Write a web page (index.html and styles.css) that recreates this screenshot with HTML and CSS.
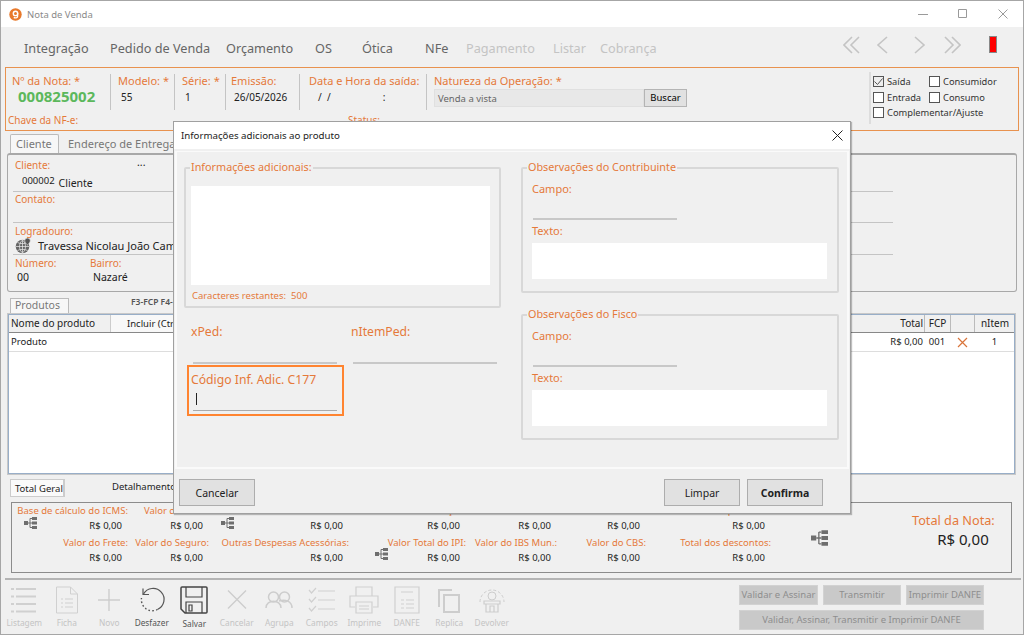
FILE: index.html
```html
<!DOCTYPE html>
<html lang="pt-BR">
<head>
    <meta charset="UTF-8">
    <meta name="viewport" content="width=device-width, initial-scale=1.0">
    <title>Nota de Venda</title>
    <link rel="stylesheet" href="styles.css">
</head>
<body>
    <svg class="defs" width="0" height="0">
        <symbol id="tree" viewBox="0 0 13 12">
            <path d="M0 4h4v4H0zM8 0h5v3H8zM8 4.5h5v3H8zM8 9h5v3H8z" fill="#6e6e6e"/>
            <path d="M4 6h4M6 1.5V10.5M6 1.5h2M6 10.5h2" stroke="#6e6e6e" fill="none"/>
        </symbol>
    </svg>

    <div class="window">
        <div class="titlebar">
            <svg class="app-icon" width="13" height="13" viewBox="0 0 13 13"><circle cx="6.5" cy="6.5" r="6.2" fill="#e8792b"/><circle cx="6.5" cy="5.4" r="2.2" fill="none" stroke="#fff" stroke-width="1.4"/><path d="M8.6 5v3.4c0 1.5-2.6 1.8-3.8 1" fill="none" stroke="#fff" stroke-width="1.3"/></svg>
            <span class="title-text">Nota de Venda</span>
            <div class="win-controls">
                <svg width="10" height="10" viewBox="0 0 10 10"><path d="M0 5.5h10" stroke="#9a9a9a"/></svg>
                <svg width="10" height="10" viewBox="0 0 10 10"><path d="M.5.5h8v8h-8z" fill="none" stroke="#9a9a9a"/></svg>
                <svg width="10" height="10" viewBox="0 0 10 10"><path d="M.5.5l9 9M9.5.5l-9 9" stroke="#9a9a9a"/></svg>
            </div>
        </div>

        <div class="menubar">
            <div class="menu-items">
                <span>Integração</span>
                <span>Pedido de Venda</span>
                <span>Orçamento</span>
                <span>OS</span>
                <span>Ótica</span>
                <span>NFe</span>
                <span class="off">Pagamento</span>
                <span class="off">Listar</span>
                <span class="off">Cobrança</span>
            </div>
            <div class="nav-arrows">
                <svg width="17" height="18" viewBox="0 0 17 18"><path d="M9 1L1 9l8 8M16 1L8 9l8 8" fill="none" stroke="#c4c4c4" stroke-width="1.6"/></svg>
                <svg class="nav-prev" width="12" height="18" viewBox="0 0 12 18"><path d="M11 1L2 9l9 8" fill="none" stroke="#c4c4c4" stroke-width="1.6"/></svg>
                <svg class="nav-next" width="12" height="18" viewBox="0 0 12 18"><path d="M1 1l9 8-9 8" fill="none" stroke="#c4c4c4" stroke-width="1.6"/></svg>
                <svg class="nav-last" width="17" height="18" viewBox="0 0 17 18"><path d="M1 1l8 8-8 8M8 1l8 8-8 8" fill="none" stroke="#c4c4c4" stroke-width="1.6"/></svg>
                <span class="red-flag"></span>
            </div>
        </div>

        <div class="note-head">
            <div class="note-main">
                <div class="note-fields">
                    <div class="nf nf-num"><label>Nº da Nota: *</label><b class="num">000825002</b></div>
                    <div class="nf nf-mod"><label>Modelo: *</label><span>55</span></div>
                    <div class="nf nf-ser"><label>Série: *</label><span>1</span></div>
                    <div class="nf nf-emi"><label>Emissão:</label><span>26/05/2026</span></div>
                    <div class="nf nf-sai"><label>Data e Hora da saída:</label><span class="dt"><i>/ &nbsp;/</i><i>:</i></span></div>
                    <div class="nf nf-nat">
                        <label>Natureza da Operação: *</label>
                        <div class="nat-row"><div class="nat-input">Venda a vista</div><button class="btn-small">Buscar</button></div>
                    </div>
                </div>
                <div class="note-keys"><label>Chave da NF-e:</label><label>Status:</label></div>
            </div>
            <div class="note-checks">
                <div class="check"><span class="box on"><svg width="13" height="13" viewBox="0 0 13 13"><path d="M2.5 6.5l3 3 5-6" fill="none" stroke="#555"/></svg></span>Saída</div>
                <div class="check"><span class="box"></span>Consumidor</div>
                <div class="check"><span class="box"></span>Entrada</div>
                <div class="check"><span class="box"></span>Consumo</div>
                <div class="check wide"><span class="box"></span>Complementar/Ajuste</div>
            </div>
        </div>

        <div class="tabs">
            <span class="tab active">Cliente</span>
            <span class="tab">Endereço de Entrega</span>
        </div>
        <div class="client-panel">
            <div class="c-row c-row1">
                <div class="c-top"><label>Cliente:</label><span class="dots">...</span></div>
                <div class="c-val"><span class="code">000002</span><span class="c-name">Cliente</span></div>
            </div>
            <div class="c-row c-row2"><label>Contato:</label></div>
            <div class="c-row c-row3">
                <label>Logradouro:</label>
                <div class="c-addr">
                    <svg width="16" height="16" viewBox="0 0 16 16"><circle cx="7.5" cy="8.5" r="6.8" fill="#666"/><path d="M1 8.5h13M7.5 2v13M2.5 4.5c3 1.500 7 1.500 10 0M2.500 12.500c3-1.500 7-1.500 10 0M7.500 2c-4 3-4 10 0 13M7.500 2c4 3 4 10 0 13" fill="none" stroke="#eee" stroke-width=".7"/><path d="M12.500 0a2.800 2.800 0 0 1 2.800 2.800c0 1.800-2.800 4.200-2.800 4.200S9.700 4.600 9.700 2.800A2.800 2.800 0 0 1 12.500 0z" fill="#555" stroke="#f0f0f0" stroke-width=".6"/></svg>
                    <span>Travessa Nicolau João Camargo</span>
                </div>
            </div>
            <div class="c-row4">
                <div class="c-num"><label>Número:</label><span>00</span></div>
                <div class="c-bai"><label>Bairro:</label><span>Nazaré</span></div>
            </div>
        </div>

        <div class="prod-tabs">
            <span class="tab-prod">Produtos</span>
            <span class="prod-hint">F3-FCP F4-Lote</span>
        </div>
        <div class="prod-table">
            <div class="p-row p-head">
                <span class="p-name">Nome do produto</span>
                <span class="p-add">Incluir (Ctrl+I)</span>
                <span class="p-total">Total</span>
                <span class="p-fcp">FCP</span>
                <span class="p-del"></span>
                <span class="p-item">nItem</span>
            </div>
            <div class="p-row p-line">
                <span class="p-name">Produto</span>
                <span class="p-add-empty"></span>
                <span class="p-total">R$ 0,00</span>
                <span class="p-fcp">001</span>
                <span class="p-del"><svg width="11" height="11" viewBox="0 0 11 11"><path d="M1 1l9 9M10 1l-9 9" stroke="#d9743a" stroke-width="1.2"/></svg></span>
                <span class="p-item">1</span>
            </div>
        </div>

        <div class="total-tabs">
            <span class="tab-total">Total Geral</span>
            <span class="tab-detail">Detalhamento</span>
        </div>
        <div class="totals">
            <div class="totals-grid">
                <label>Base de cálculo do ICMS:</label>
                <label>Valor do ICMS:</label>
                <label>Base de cálculo do ICMS ST:</label>
                <label>Valor ICMS Substituição:</label>
                <label>Valor do IPI:</label>
                <label>Valor do IBS Est.:</label>
                <label>Valor Total dos produtos:</label>

                <div class="tv"><svg class="tree"><use href="#tree"/></svg><span>R$ 0,00</span></div>
                <div class="tv"><span>R$ 0,00</span></div>
                <div class="tv tv-st"><svg class="tree"><use href="#tree"/></svg><span>R$ 0,00</span></div>
                <div class="tv"><span>R$ 0,00</span></div>
                <div class="tv"><span>R$ 0,00</span></div>
                <div class="tv"><span>R$ 0,00</span></div>
                <div class="tv"><span>R$ 0,00</span></div>

                <label>Valor do Frete:</label>
                <label>Valor do Seguro:</label>
                <label>Outras Despesas Acessórias:</label>
                <label>Valor Total do IPI:</label>
                <label>Valor do IBS Mun.:</label>
                <label>Valor do CBS:</label>
                <label>Total dos descontos:</label>

                <div class="tv"><span>R$ 0,00</span></div>
                <div class="tv"><span>R$ 0,00</span></div>
                <div class="tv"><span>R$ 0,00</span></div>
                <div class="tv tv-ipi"><svg class="tree"><use href="#tree"/></svg><span>R$ 0,00</span></div>
                <div class="tv"><span>R$ 0,00</span></div>
                <div class="tv"><span>R$ 0,00</span></div>
                <div class="tv"><span>R$ 0,00</span></div>
            </div>
            <svg class="tree-big"><use href="#tree"/></svg>
            <div class="grand">
                <label>Total da Nota:</label>
                <span>R$ 0,00</span>
            </div>
        </div>

        <div class="footer">
            <div class="tools">
                <div class="tool"><svg width="28" height="28" viewBox="0 0 28 28"><path d="M6 3h20M6 10.500h20M6 18h20M6 25.500h20M1 3h3M1 10.500h3M1 18h3M1 25.500h3" stroke="#d0d0d0" stroke-width="1.800" fill="none"/></svg><span>Listagem</span></div>
                <div class="tool"><svg width="28" height="28" viewBox="0 0 28 28"><path d="M3.500 1h14l7 7v19h-21zM17.500 1v7h7M8 13h2M12 13h8M8 17h2M12 17h8M8 21h2M12 21h8" fill="none" stroke="#d0d0d0"/></svg><span>Ficha</span></div>
                <div class="tool"><svg width="28" height="28" viewBox="0 0 28 28"><path d="M14 3v22M3 14h22" stroke="#cdcdcd" stroke-width="1.400"/></svg><span>Novo</span></div>
                <div class="tool dark"><svg width="28" height="28" viewBox="0 0 28 28"><path d="M5 2.500V8.500h6" fill="none" stroke="#555" stroke-width="1.200"/><path d="M5.500 8A11 11 0 1 1 19.500 23.500" fill="none" stroke="#555" stroke-width="1.200"/><path d="M19.500 23.500A11 11 0 0 1 3.500 12" fill="none" stroke="#555" stroke-width="1.400" stroke-dasharray="1.600 2.200"/></svg><span>Desfazer</span></div>
                <div class="tool dark"><svg width="28" height="28" viewBox="0 0 28 28"><path d="M1 2a1 1 0 0 1 1-1h24a1 1 0 0 1 1 1v24a1 1 0 0 1-1 1H5l-4-4z" fill="none" stroke="#444" stroke-width="1.500"/><path d="M6 1v10h16V1M6 27V16h16v11M9 19h3v6H9z" fill="none" stroke="#444" stroke-width="1.200"/></svg><span class="save-label">Salvar</span></div>
                <div class="tool"><svg width="28" height="28" viewBox="0 0 28 28"><path d="M5 4.500l18 18M23 4.500l-18 18" stroke="#cdcdcd" stroke-width="1.400"/></svg><span>Cancelar</span></div>
                <div class="tool"><svg width="28" height="28" viewBox="0 0 28 28"><circle cx="8.500" cy="11" r="5" fill="none" stroke="#cdcdcd" stroke-width="1.500"/><circle cx="19.500" cy="11" r="5" fill="none" stroke="#cdcdcd" stroke-width="1.500"/><path d="M1 22c0-9 15-9 15 0M14 15c6-2 13 0 13 7" fill="none" stroke="#cdcdcd" stroke-width="1.500"/></svg><span>Agrupa</span></div>
                <div class="tool"><svg width="28" height="28" viewBox="0 0 28 28"><path d="M10 5h17M10 14h17M10 23h17M1 4l2.500 3L8 2M1 13l2.500 3L8 11M1 22l2.500 3L8 20" fill="none" stroke="#d0d0d0" stroke-width="1.200"/></svg><span>Campos</span></div>
                <div class="tool"><svg width="30" height="28" viewBox="0 0 30 28"><path d="M7 10V1h16v9M6 21H1V10h28v11h-5M7 16h16v11H7zM10 20h10M10 23h10" fill="none" stroke="#d0d0d0" stroke-width="1.200"/></svg><span>Imprime</span></div>
                <div class="tool"><svg width="28" height="28" viewBox="0 0 28 28"><path d="M2 1h24v26H2zM8 6h12M8 14h3M13 14h8M8 18h3M13 18h8M8 22h3M13 22h8" fill="none" stroke="#d0d0d0" stroke-width="1.200"/></svg><span>DANFE</span></div>
                <div class="tool"><svg width="28" height="28" viewBox="0 0 28 28"><path d="M4 21V4h13M9 9h15v17H9z" fill="none" stroke="#cdcdcd" stroke-width="2"/></svg><span>Replica</span></div>
                <div class="tool"><svg width="28" height="28" viewBox="0 0 28 28"><path d="M2 16a12 12 0 0 1 24 0" fill="none" stroke="#cdcdcd" stroke-dasharray="3 2"/><circle cx="14" cy="10" r="4" fill="none" stroke="#cdcdcd"/><path d="M6 15h16v3H6zM8 18v8h12v-8M12 20h4v6h-4z" fill="none" stroke="#cdcdcd" stroke-width="1.200"/></svg><span>Devolver</span></div>
            </div>
            <div class="send-btns">
                <span>Validar e Assinar</span>
                <span>Transmitir</span>
                <span>Imprimir DANFE</span>
                <span class="all">Validar, Assinar, Transmitir e Imprimir DANFE</span>
            </div>
        </div>
    </div>

    <div class="dialog">
        <div class="dlg-title">
            <span>Informações adicionais ao produto</span>
            <svg width="11" height="11" viewBox="0 0 11 11"><path d="M.5.5l10 10M10.500.5l-10 10" stroke="#222"/></svg>
        </div>
        <div class="dlg-body">
            <div class="dlg-left">
                <div class="group group-info">
                    <span class="legend">Informações adicionais:</span>
                    <div class="white-box"></div>
                    <div class="remain"><span>Caracteres restantes:</span><span>500</span></div>
                </div>
                <div class="ped-row">
                    <div class="ped"><label>xPed:</label><div class="ped-line"></div></div>
                    <div class="ped"><label>nItemPed:</label><div class="ped-line"></div></div>
                </div>
                <div class="highlight">
                    <label>Código Inf. Adic. C177</label>
                    <div class="caret"></div>
                    <div class="ped-line"></div>
                </div>
            </div>
            <div class="dlg-right">
                <div class="group group-obs">
                    <span class="legend">Observações do Contribuinte</span>
                    <label>Campo:</label>
                    <div class="ped-line obs-line"></div>
                    <label class="obs-text">Texto:</label>
                    <div class="white-box"></div>
                </div>
                <div class="group group-obs">
                    <span class="legend">Observações do Fisco</span>
                    <label>Campo:</label>
                    <div class="ped-line obs-line"></div>
                    <label class="obs-text">Texto:</label>
                    <div class="white-box"></div>
                </div>
            </div>
        </div>
        <div class="dlg-foot">
            <button class="btn">Cancelar</button>
            <button class="btn btn-limpar">Limpar</button>
            <button class="btn btn-main">Confirma</button>
        </div>
    </div>
</body>
</html>
```

FILE: styles.css
```css
* {
    box-sizing: border-box;
}
html, body {
    height: 635px;
    overflow: hidden;
}
body {
    margin: 0;
    font-family: "Noto Sans", "Open Sans", sans-serif;
    font-size: 10px;
    color: #222;
    background-color: #f0f0f0;
}
label {
    color: #e5793a;
    display: block;
    white-space: nowrap;
}
.defs {
    display: block;
    height: 0;
}
.window {
    position: relative;
    height: 635px;
    border: 1px solid #a6a6a6;
    display: flex;
    flex-direction: column;
}

/* barra de titulo */
.titlebar {
    height: 26px;
    background-color: #fff;
    display: flex;
    align-items: center;
    padding-left: 8px;
    color: #8a8a8a;
    font-size: 9.500px;
}
.title-text {
    margin-left: 5px;
}
.win-controls {
    margin-left: auto;
    display: flex;
    gap: 30px;
    padding-right: 15px;
}

/* menu */
.menubar {
    height: 40px;
    display: flex;
    padding-top: 12px;
}
.menu-items {
    display: grid;
    grid-template-columns: 86px 116px 89px 47px 63px 41px 87px 47px 60px;
    margin-left: 23px;
    font-size: 12.700px;
    color: #666;
    height: 20px;
    white-space: nowrap;
}
.menu-items .off {
    color: #c4c4c4;
}
.nav-arrows {
    margin-left: auto;
    display: flex;
    align-items: flex-start;
    margin-top: -3px;
    padding-right: 26px;
    gap: 20px;
}
.nav-prev { margin-left: -4px; }
.nav-next { margin-left: 6px; }
.nav-last { margin-left: -2px; }
.red-flag {
    width: 8px;
    height: 17px;
    background-color: #f00;
    border: 1px solid #888;
    margin-left: 8px;
}

/* cabecalho da nota */
.note-head {
    height: 64px;
    margin: 0 4px;
    border: 1px solid #e8924f;
    display: flex;
    justify-content: space-between;
}
.note-main {
    display: flex;
    flex-direction: column;
}
.note-fields {
    display: flex;
    margin-top: 6px;
    height: 36px;
}
.nf {
    border-right: 1px solid #c4c4c4;
    padding-left: 7px;
    font-size: 10px;
    line-height: 14px;
}
.nf label {
    font-size: 11px;
}
.nf span {
    padding-left: 3px;
    display: block;
    margin-top: 2px;
}
.nf-num { width: 105px; padding-left: 6px; }
.nf-mod { width: 64px; }
.nf-ser { width: 51px; }
.nf-emi { width: 74px; padding-left: 5px; }
.nf-sai { width: 127px; padding-left: 9px; }
.nf-nat { width: 270px; border-right: 0; }
.num {
    display: block;
    color: #5cb85c;
    font-size: 15px;
    font-weight: 700;
    line-height: 17px;
    padding-left: 6px;
}
.nf span.dt {
    display: flex;
    gap: 52px;
    padding-left: 9px;
}
.dt i {
    font-style: normal;
}
.nat-row {
    display: flex;
    margin-top: 1px;
}
.nat-input {
    width: 210px;
    height: 18px;
    background-color: #e8e8e8;
    border: 1px solid #e0e0e0;
    color: #666;
    font-size: 9.500px;
    line-height: 17px;
    padding-left: 3px;
}
.btn-small {
    width: 43px;
    height: 18px;
    padding: 0;
    font: inherit;
    font-size: 9.500px;
    background-color: #e1e1e1;
    border: 1px solid #b4b4b4;
}
.note-keys {
    display: flex;
    padding-left: 2px;
    margin-top: 3px;
    font-size: 10px;
}
.note-keys label:first-child {
    width: 340px;
}
.note-checks {
    width: 144px;
    margin: 4px 5px 0 0;
    height: 52px;
    border-left: 2px solid #ddd;
    padding: 2px 0 0 2px;
    display: grid;
    grid-template-columns: 56px 1fr;
    grid-auto-rows: 15.500px;
    font-size: 9.300px;
    color: #333;
}
.check {
    display: flex;
    align-items: center;
    gap: 3px;
    white-space: nowrap;
}
.check.wide {
    grid-column: span 2;
}
.box {
    width: 11px;
    height: 11px;
    background-color: #fff;
    border: 1px solid #555;
    display: block;
}
.box.on {
    background-color: #eee;
}
.box svg {
    display: block;
    margin: -2px;
    width: 13px;
}

/* abas do cliente */
.tabs {
    height: 22px;
    margin-left: 9px;
    padding-top: 3px;
    display: flex;
    align-items: flex-end;
    font-size: 11px;
    color: #777;
}
.tab {
    padding: 0 10px 0 0;
    line-height: 18px;
    margin-left: 9px;
    white-space: nowrap;
}
.tab.active {
    background-color: #f7f7f7;
    border: 1px solid #bbb;
    border-bottom: 0;
    border-radius: 2px 2px 0 0;
    width: 49px;
    padding-left: 5px;
    margin-left: 0;
}
.client-panel {
    margin: 0 6px;
    height: 139px;
    border: 1px solid #a8a8a8;
    border-top-width: 2px;
    border-radius: 3px;
    padding: 0 0 0 5px;
    font-size: 10.500px;
    line-height: 14px;
}
.c-row {
    width: 880px;
    border-bottom: 1px solid #c4c4c4;
    padding-left: 2px;
}
.c-row label, .c-row4 label {
    font-size: 10px;
}
.c-row1 { height: 37px; padding-top: 3px; }
.c-row2 { height: 31px; padding-top: 0; }
.c-row3 { height: 32px; padding-top: 1px; }
.c-top {
    display: flex;
}
.c-top label {
    width: 122px;
}
.dots {
    line-height: 8px;
}
.c-val {
    display: flex;
    align-items: flex-start;
    padding-left: 7px;
    gap: 4px;
    margin-top: 2px;
}
.code {
    font-size: 9.500px;
}
.c-name {
    margin-top: 2px;
}
.c-addr {
    display: flex;
    align-items: center;
    gap: 7px;
    white-space: nowrap;
    font-size: 11px;
}
.c-row4 {
    display: flex;
    padding: 1px 0 0 2px;
}
.c-num { width: 75px; }
.c-bai span { padding-left: 3px; }
.c-num span { padding-left: 2px; }
.c-row4 span {
    display: block;
}

/* produtos */
.prod-tabs {
    height: 22px;
    margin-top: 0;
    padding-left: 9px;
    display: flex;
    align-items: flex-end;
    overflow: visible;
}
.tab-prod {
    width: 59px;
    height: 16px;
    background-color: #f7f7f7;
    border: 1px solid #bbb;
    border-bottom: 0;
    padding-left: 4px;
    font-size: 10.500px;
    line-height: 12px;
    color: #777;
}
.prod-hint {
    margin: 0 0 7px 62px;
    font-size: 8.500px;
    font-weight: 600;
    color: #555;
    white-space: nowrap;
}
.prod-table {
    margin: 0 8px 0 7px;
    height: 160px;
    background-color: #fff;
    border: 1px solid #98aec8;
    box-shadow: 0 0 0 1px #c8c8c8;
    font-size: 9.500px;
}
.p-row {
    display: flex;
    white-space: nowrap;
    line-height: 17px;
}
.p-head {
    height: 18px;
    background-color: #f0f0f0;
    border-bottom: 1px solid #888;
    font-size: 10px;
}
.p-line {
    height: 19px;
    border-bottom: 1px solid #ddd;
    line-height: 18px;
}
.p-name {
    width: 101px;
    padding-left: 2px;
    flex: none;
}
.p-add {
    width: 72px;
    flex: none;
    background-color: #f8f8f8;
    border-left: 1px solid #ccc;
    padding-left: 16px;
    font-size: 9.500px;
}
.p-add-empty {
    width: 72px;
    flex: none;
}
.p-total {
    width: 742px;
    text-align: right;
    padding-right: 1px;
    flex: none;
}
.p-fcp {
    width: 26px;
    text-align: center;
    flex: none;
}
.p-del {
    width: 24px;
    display: flex;
    align-items: center;
    justify-content: center;
    flex: none;
}
.p-item {
    width: 38px;
    padding-left: 3px;
    text-align: center;
    flex: none;
}
.p-head .p-fcp, .p-head .p-del, .p-head .p-item {
    border-left: 1px solid #bbb;
}

/* totais */
.total-tabs {
    height: 23px;
    margin-top: 5px;
    padding-left: 9px;
    display: flex;
    align-items: flex-start;
    font-size: 9.500px;
    white-space: nowrap;
}
.tab-total {
    width: 55px;
    height: 18px;
    background-color: #fafafa;
    border: 1px solid #ccc;
    border-right-width: 2px;
    padding-left: 4px;
    line-height: 17px;
}
.tab-detail {
    margin-left: 47px;
    line-height: 16px;
}
.totals {
    height: 71px;
    margin: 0 11px 0 10px;
    border: 1px solid #8c8c8c;
    display: flex;
    padding: 1px 0 0 5px;
}
.totals-grid {
    display: grid;
    grid-template-columns: 111px 81px 140px 117px 91px 89px 125px;
    grid-template-rows: 14px 14px 18px 14px;
    width: 754px;
    font-size: 9.500px;
    line-height: 15px;
}
.totals-grid label {
    text-align: right;
    align-self: end;
}
.tv {
    display: flex;
    justify-content: space-between;
    align-items: center;
    padding-right: 6px;
}
.tv span {
    margin-left: auto;
}
.tree {
    width: 13px;
    height: 12px;
    margin: -5px 0 0 7px;
}
.tv-st .tree {
    margin-left: 12px;
}
.tv-ipi .tree {
    margin: -6px 0 0 26px;
}
.tree-big {
    width: 17px;
    height: 16px;
    margin: 26px 0 0 40px;
}
.grand {
    margin-left: 84px;
    text-align: right;
    padding-top: 8px;
}
.grand label {
    font-size: 12.700px;
    line-height: 17px;
}
.grand span {
    display: block;
    font-size: 15px;
    line-height: 20px;
    padding-right: 6px;
}

/* rodape */
.footer {
    flex: 1;
    margin: 5px 2px 0 4px;
    border-top: 2px solid #b4b4b4;
    display: flex;
    justify-content: space-between;
}
.tools {
    display: grid;
    grid-template-columns: repeat(12, 42.500px);
    grid-auto-rows: 48px;
    margin-left: -2px;
    padding-top: 6px;
}
.tool {
    display: flex;
    flex-direction: column;
    align-items: center;
    font-size: 8.300px;
    color: #c4c4c4;
    line-height: 12px;
}
.tool svg {
    height: 28px;
    margin-bottom: 3px;
}
.tool.dark {
    color: #555;
}
.save-label {
    margin-top: 1px;
}
.send-btns {
    display: grid;
    grid-template-columns: 79px 78px 78px;
    grid-auto-rows: 20px;
    gap: 5px;
    margin: 5px 37px 0 0;
    font-size: 9.500px;
    color: #8e8e8e;
    text-align: center;
    line-height: 20px;
    white-space: nowrap;
}
.send-btns span {
    background-color: #c9c9c9;
    border: 1px solid #d2d2d2;
    line-height: 18px;
}
.send-btns .all {
    grid-column: span 3;
}

/* dialogo modal por cima da janela */
.dialog {
    position: absolute;
    left: 173px;
    top: 121px;
    width: 678px;
    height: 393px;
    background-color: #f0f0f0;
    border: 1px solid #a0a0a0;
    box-shadow: 1px 1px 1px rgba(0, 0, 0, 0.25);
    display: flex;
    flex-direction: column;
}
.dlg-title {
    height: 27px;
    flex: none;
    background-color: #fff;
    display: flex;
    align-items: center;
    justify-content: space-between;
    padding: 0 7px;
    font-size: 9.700px;
    color: #222;
}
.dlg-body {
    height: 318px;
    flex: none;
    margin: 2px 1px 0;
    border: 2px solid #fafafa;
    border-top-width: 1px;
    display: flex;
    padding: 15px 0 0 7px;
}
.dlg-left {
    width: 317px;
    margin-right: 20px;
}
.group {
    position: relative;
    border: 2px solid #d8d8d8;
    border-radius: 2px;
}
.group label {
    font-size: 11px;
}
.legend {
    position: absolute;
    top: -10px;
    left: 4px;
    padding: 0 1px;
    background-color: #f0f0f0;
    color: #e5793a;
    font-size: 10.800px;
    line-height: 16px;
    white-space: nowrap;
}
.white-box {
    background-color: #fff;
}
.group-info {
    height: 141px;
    padding: 17px 9px 0 5px;
}
.group-info .white-box {
    height: 99px;
}
.remain {
    display: flex;
    gap: 5px;
    padding: 4px 0 0 1px;
    font-size: 9.500px;
    line-height: 13px;
    color: #e5793a;
    white-space: nowrap;
}
.ped-row {
    display: flex;
    margin-top: 15px;
    padding-left: 7px;
}
.ped {
    width: 160px;
    flex: none;
}
.ped label, .highlight label {
    font-size: 12.200px;
    line-height: 17px;
}
.ped-line {
    margin: 22px 0 0 2px;
    width: 144px;
    border-top: 2px solid #c8c8c8;
}
.highlight {
    width: 157px;
    height: 51px;
    margin: 1px 0 0 3px;
    border: 2px solid #ff8430;
    padding: 4px 0 0 2px;
}
.caret {
    width: 1px;
    height: 12px;
    margin: 5px 0 0 5px;
    background-color: #222;
}
.highlight .ped-line {
    margin-top: 5px;
    border-top-width: 1px;
    border-top-color: #aaa;
}
.dlg-right {
    width: 318px;
}
.group-obs {
    height: 126px;
    padding: 12px 10px 0 9px;
    margin-bottom: 21px;
}
.group-obs label {
    line-height: 16px;
}
.obs-line {
    margin-top: 21px;
    margin-left: 1px;
}
.obs-text {
    margin-top: 3px;
}
.group-obs .white-box {
    height: 36px;
    margin-top: 4px;
}
.dlg-foot {
    flex: 1;
    display: flex;
    align-items: flex-start;
    padding: 10px 0 0 5px;
}
.btn {
    width: 76px;
    height: 27px;
    background-color: #e1e1e1;
    border: 1px solid #adadad;
    font-family: inherit;
    font-size: 10.500px;
    color: #222;
    padding: 0;
}
.btn-limpar {
    margin-left: 409px;
}
.btn-main {
    margin-left: 7px;
    font-weight: 700;
}
```
